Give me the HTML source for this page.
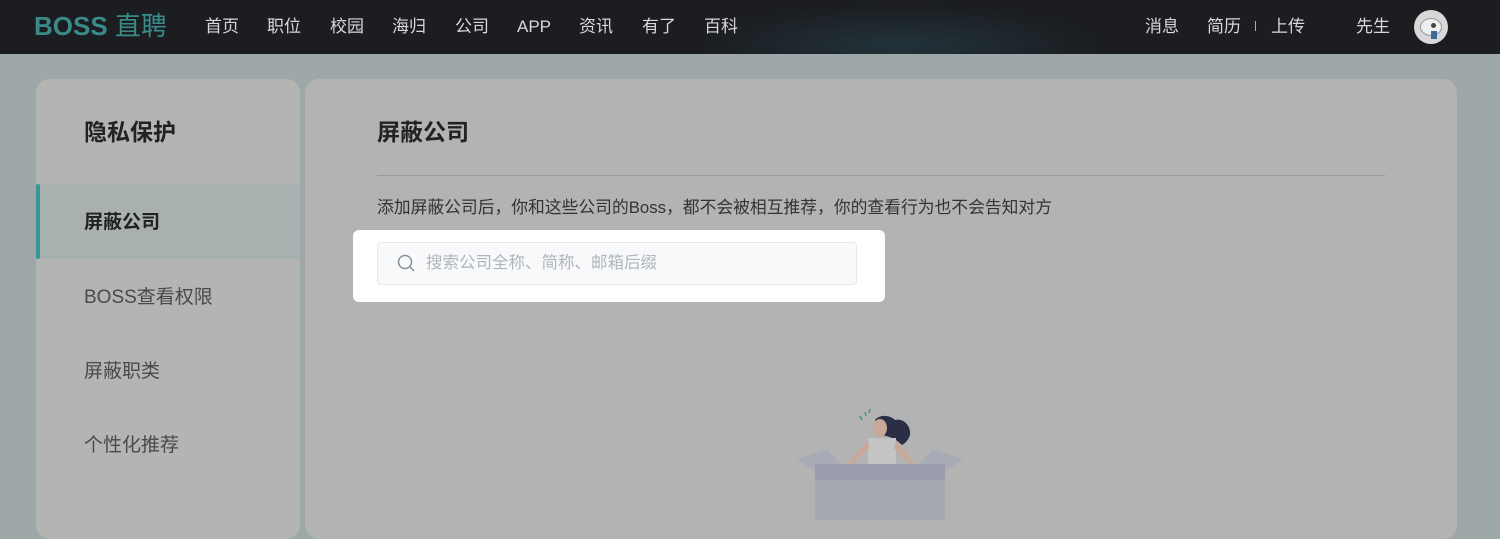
<!DOCTYPE html>
<html><head><meta charset="utf-8"><style>
*{margin:0;padding:0;box-sizing:border-box}
body{width:1500px;height:520px;overflow:hidden;background:#9fa8a8;font-family:"Liberation Sans","Noto Sans CJK SC",sans-serif;position:relative}
.hd{position:absolute;left:0;top:0;width:1500px;height:54px;background:radial-gradient(ellipse 200px 40px at 900px 45px,#22333a 0%,#1b1d21 100%);}
.logo{position:absolute;left:34px;top:9px;color:#3a8a8a;font-size:26px;font-weight:bold;line-height:34px}
.nav{position:absolute;top:15px;color:#d8d8d8;font-size:17px;line-height:24px}
.side{position:absolute;left:36px;top:79px;width:264px;height:460px;background:#b4b4b3;border-radius:14px;overflow:hidden}
.side .t{position:absolute;left:48px;top:37px;font-size:23px;font-weight:bold;color:#222;line-height:32px}
.side .it{position:absolute;left:48px;font-size:19px;color:#4a4a4a;line-height:28px}
.act{position:absolute;left:0;top:105px;width:264px;height:75px;background:#a8b1b0}
.act i{position:absolute;left:0;top:0;width:4px;height:75px;background:#3a9690;border-radius:2px}
.main{position:absolute;left:305px;top:79px;width:1152px;height:460px;background:#b3b3b3;border-radius:14px}
.main h1{position:absolute;left:72px;top:37px;font-size:23px;font-weight:bold;color:#222;line-height:32px}
.line{position:absolute;left:72px;top:96px;width:1008px;height:1px;background:#9a9a9a}
.desc{position:absolute;left:72px;top:117px;font-size:16.8px;color:#333;line-height:24px;white-space:nowrap}
.hl{position:absolute;left:353px;top:230px;width:532px;height:72px;background:#fff;border-radius:6px}
.inp{position:absolute;left:377px;top:242px;width:480px;height:43px;background:#f8f9fa;border:1px solid #e6e8eb;border-radius:4px}
.inp span{position:absolute;left:48px;top:8px;font-size:16.5px;color:#b1b5bb;line-height:24px}
</style></head><body>
<div class="hd">
<div class="logo">BOSS <span style="font-weight:normal">直聘</span></div>
<div class="nav" style="left:205px">首页</div>
<div class="nav" style="left:267px">职位</div>
<div class="nav" style="left:330px">校园</div>
<div class="nav" style="left:392px">海归</div>
<div class="nav" style="left:455px">公司</div>
<div class="nav" style="left:517px">APP</div>
<div class="nav" style="left:579px">资讯</div>
<div class="nav" style="left:642px">有了</div>
<div class="nav" style="left:704px">百科</div>
<div class="nav" style="left:1145px">消息</div>
<div class="nav" style="left:1207px">简历</div>
<div style="position:absolute;left:1255px;top:21px;width:1px;height:10px;background:#aaa"></div>
<div class="nav" style="left:1271px">上传</div>
<div class="nav" style="left:1356px">先生</div>
<div style="position:absolute;left:1414px;top:10px;width:34px;height:34px;border-radius:50%;background:#d8d8d8;overflow:hidden"><div style="position:absolute;left:6px;top:8px;width:22px;height:18px;border-radius:50%;background:#eee;border:1px solid #999"></div><div style="position:absolute;left:17px;top:21px;width:6px;height:8px;background:#3a6a9a"></div><div style="position:absolute;left:17px;top:13px;width:5px;height:5px;border-radius:50%;background:#444"></div></div>
</div>
<div class="side">
<div class="t">隐私保护</div>
<div class="act"><i></i></div>
<div class="it" style="top:130px;color:#222;font-weight:bold">屏蔽公司</div>
<div class="it" style="top:205px">BOSS查看权限</div>
<div class="it" style="top:279px">屏蔽职类</div>
<div class="it" style="top:353px">个性化推荐</div>
</div>
<div class="main">
<h1>屏蔽公司</h1>
<div class="line"></div>
<div class="desc">添加屏蔽公司后，你和这些公司的Boss，都不会被相互推荐，你的查看行为也不会告知对方</div>
</div>
<div class="hl"></div>
<div class="inp"><svg style="position:absolute;left:19px;top:11px" width="19" height="19" viewBox="0 0 19 19"><circle cx="8" cy="8" r="6.5" fill="none" stroke="#8a8f96" stroke-width="1.5"/><path d="M13 13l4 4" stroke="#8a8f96" stroke-width="1.5"/></svg><span>搜索公司全称、简称、邮箱后缀</span></div>
<svg style="position:absolute;left:780px;top:400px" width="200" height="120" viewBox="0 0 200 120">
<path d="M80 16l2 4M85 12l1 4M90 9l-1 4" stroke="#3a9690" stroke-width="1.5"/>
<path d="M95 20c5-6 15-5 20 0 8-2 16 5 15 15-2 6-6 9-8 10-5-5-10-8-20-10z" fill="#2a2f45"/>
<ellipse cx="100" cy="28" rx="7" ry="9" fill="#c9a79a"/>
<path d="M88 38h28v30h-28z" fill="#c4c4c4"/>
<path d="M88 40l-25 30h4l22-22zM116 40l24 30h-4l-22-22z" fill="#c9a79a"/>
<path d="M17 59l30-10 14 15-16 15zM183 59l-30-10-14 15 16 15z" fill="#a8aab6"/>
<path d="M35 64h130v16h-130z" fill="#9a9eac"/>
<path d="M35 80h130v40h-130z" fill="#a6a8b2"/>
</svg>
</body></html>
